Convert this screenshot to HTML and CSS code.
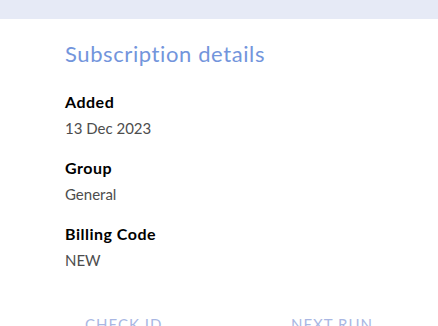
FILE: index.html
```html
<!DOCTYPE html>
<html>
  <head>
    <meta charset="utf-8" />
    <title>Subscription details</title>
    <link rel="stylesheet" href="styles.css">
  </head>
  <body>
    <div class="top-bar"></div>
    <div class="panel">
      <h2 class="panel-title">Subscription details</h2>

      <div class="detail">
        <div class="detail-label">Added</div>
        <div class="detail-value">13 Dec 2023</div>
      </div>

      <div class="detail">
        <div class="detail-label">Group</div>
        <div class="detail-value">General</div>
      </div>

      <div class="detail">
        <div class="detail-label">Billing Code</div>
        <div class="detail-value">NEW</div>
      </div>

      <div class="columns">
        <div class="column-head">CHECK ID</div>
        <div class="column-head">NEXT RUN</div>
      </div>
    </div>
  </body>
</html>
```

FILE: styles.css
```css
* {
  margin: 0;
  padding: 0;
  box-sizing: border-box;
}

body {
  font-family: Lato, "Open Sans", sans-serif;
  background-color: #fff;
  color: #000;
  overflow: hidden;
}

.top-bar {
  height: 19px;
  background-color: #e6eaf6;
}

.panel {
  padding: 21px 0 0 65px;
}

.panel-title {
  font-size: 22px;
  font-weight: normal;
  letter-spacing: 0.6px;
  color: #7395dc;
  line-height: 28px;
  margin-bottom: 20px;
}

.detail {
  margin-bottom: 12px;
}

.detail-label {
  font-size: 16px;
  font-weight: bold;
  letter-spacing: 0.5px;
  line-height: 27px;
}

.detail-value {
  font-size: 15px;
  color: #4d4d4d;
  line-height: 27px;
}

.columns {
  display: flex;
  padding-left: 20px;
  margin-top: 41px;
}

.column-head {
  flex: 0 0 206px;
  font-size: 15px;
  color: #a9b7e3;
  letter-spacing: 1px;
}
```
